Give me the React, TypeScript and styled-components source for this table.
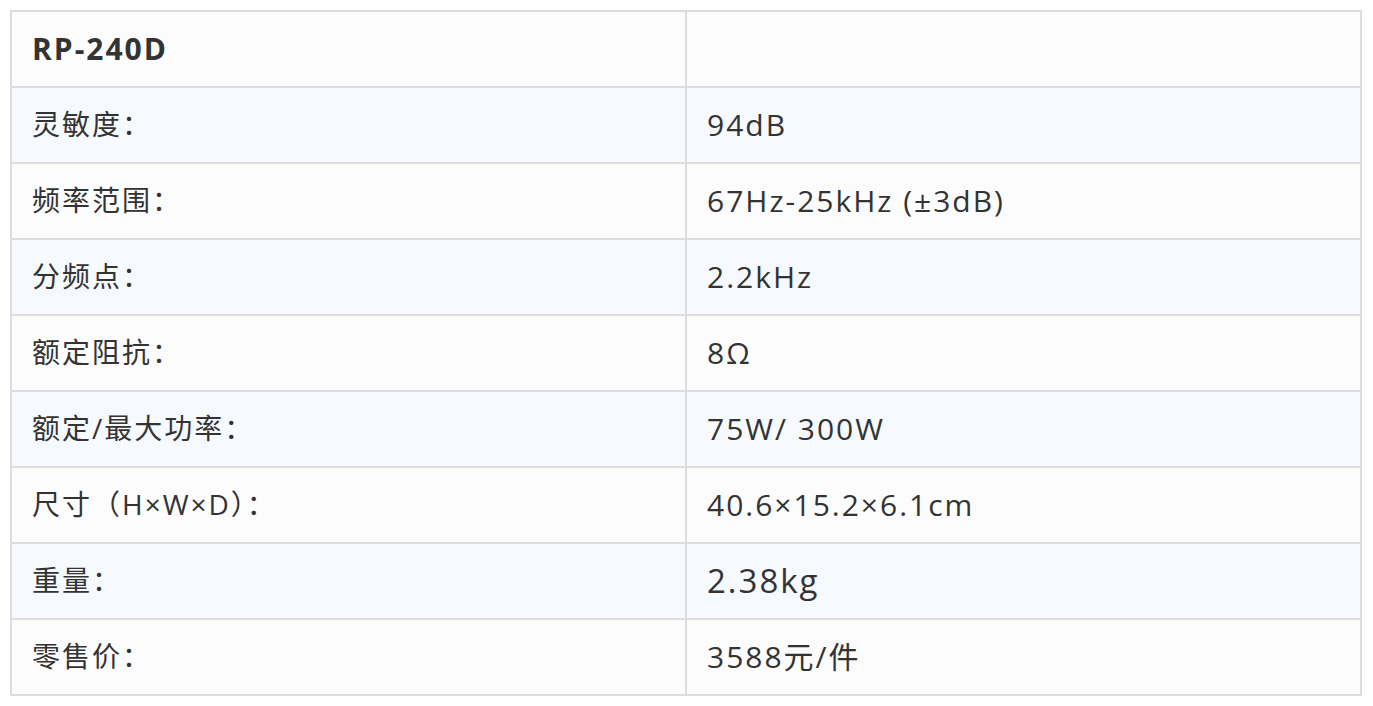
import React, { FC } from 'react'
import styled, { createGlobalStyle } from 'styled-components'

const GlobalStyle = createGlobalStyle`
  html, body {
    margin: 0;
    padding: 0;
    background: #ffffff;
  }
  body {
    font-family: 'Open Sans', 'Noto Sans CJK SC', sans-serif;
    color: #333333;
  }
`

interface ISpecRow {
  label: string
  value: string
  large?: boolean
}

const specs: ISpecRow[] = [
  { label: '灵敏度：', value: '94dB' },
  { label: '频率范围：', value: '67Hz-25kHz (±3dB)' },
  { label: '分频点：', value: '2.2kHz' },
  { label: '额定阻抗：', value: '8Ω' },
  { label: '额定/最大功率：', value: '75W/ 300W' },
  { label: '尺寸（H×W×D）：', value: '40.6×15.2×6.1cm' },
  { label: '重量：', value: '2.38kg', large: true },
  { label: '零售价：', value: '3588元/件' },
]

const SpecTable: FC = () => (
  <Page>
    <GlobalStyle />
    <Table>
      <tbody>
        <Row $striped={false}>
          <Cell>
            <Model>RP-240D</Model>
          </Cell>
          <Cell />
        </Row>
        {specs.map((spec, index) => (
          <Row key={spec.label} $striped={index % 2 === 0}>
            <Cell>
              <Label>{spec.label}</Label>
            </Cell>
            <Cell>
              <Value $large={spec.large}>{spec.value}</Value>
            </Cell>
          </Row>
        ))}
      </tbody>
    </Table>
  </Page>
)

const Page = styled.div`
  padding: 10px;
`

const Table = styled.table`
  width: 1352px;
  border-collapse: collapse;
  table-layout: fixed;
  border: 2px solid #dddddd;
`

const Row = styled.tr<{ $striped: boolean }>`
  background: ${({ $striped }) => ($striped ? '#f6f9fe' : '#fcfcfc')};
`

const Cell = styled.td`
  width: 50%;
  height: 76px;
  box-sizing: border-box;
  padding: 0 20px;
  border: 2px solid #dddddd;
  vertical-align: middle;
  line-height: 1.2;
  letter-spacing: 2px;
`

const Model = styled.strong`
  font-size: 30px;
  font-weight: 700;
`

const Label = styled.span`
  font-size: 28px;
`

const Value = styled.span<{ $large?: boolean }>`
  font-size: ${({ $large }) => ($large ? '33px' : '30px')};
`

export default SpecTable
